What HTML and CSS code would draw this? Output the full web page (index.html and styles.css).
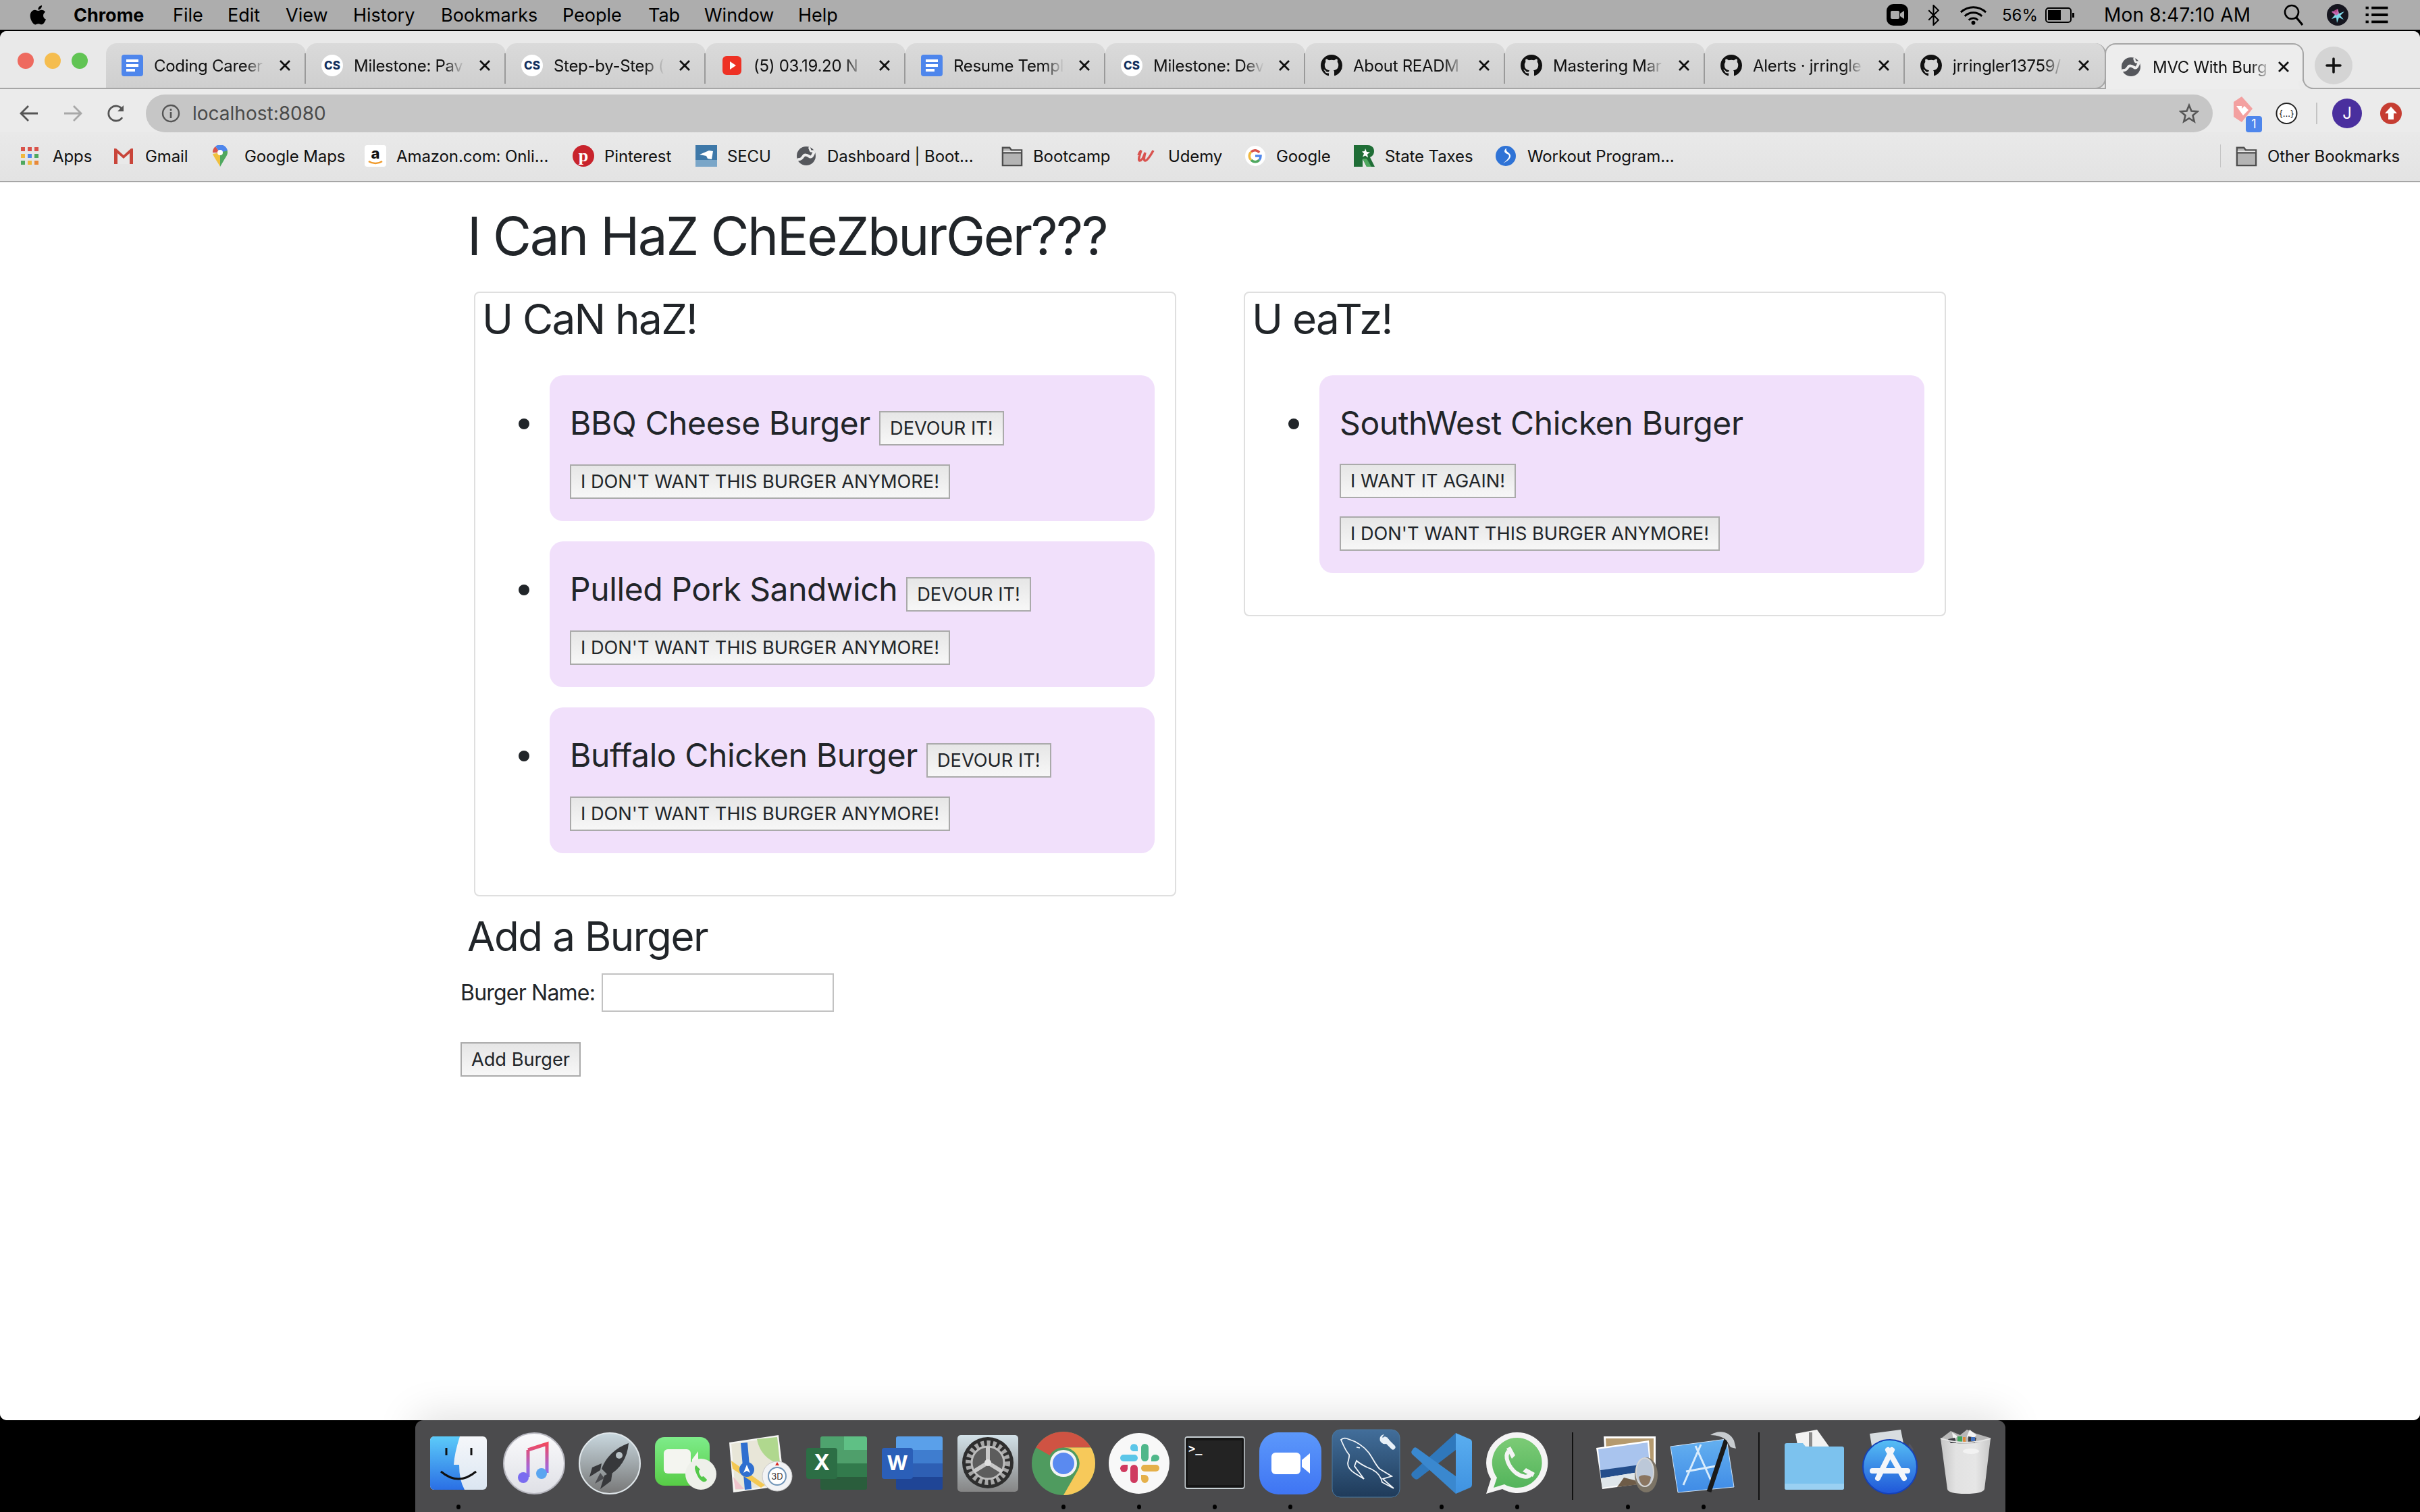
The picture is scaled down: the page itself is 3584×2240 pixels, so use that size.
FILE: index.html
```html
<!DOCTYPE html>
<html lang="en">
<head>
    <meta charset="UTF-8">
    <meta name="viewport" content="width=device-width, initial-scale=1.0">
    <title>MVC With Burgers</title>
    <link rel="stylesheet" href="styles.css">
</head>
<body>

    <svg class="defs" width="0" height="0">
        <defs>
            <symbol id="fav-docs" viewBox="0 0 32 32">
                <rect x="0" y="0" width="32" height="32" rx="4" fill="#4e86ec"/>
                <rect x="7" y="7" width="18" height="4" fill="#fff"/>
                <rect x="7" y="14" width="18" height="4" fill="#fff"/>
                <rect x="7" y="21" width="13" height="4" fill="#fff"/>
            </symbol>
            <symbol id="fav-cs" viewBox="0 0 32 32">
                <circle cx="16" cy="16" r="16" fill="#fff"/>
                <text x="16" y="22" text-anchor="middle" font-family="Inter, sans-serif" font-weight="800" font-size="17" fill="#12305e">CS</text>
            </symbol>
            <symbol id="fav-git" viewBox="0 0 16 16">
                <path fill="#111" d="M8 0C3.58 0 0 3.58 0 8c0 3.54 2.29 6.53 5.47 7.59.4.07.55-.17.55-.38 0-.19-.01-.82-.01-1.49-2.01.37-2.53-.49-2.69-.94-.09-.23-.48-.94-.82-1.13-.28-.15-.68-.52-.01-.53.63-.01 1.08.58 1.23.82.72 1.21 1.87.87 2.33.66.07-.52.28-.87.51-1.07-1.78-.2-3.64-.89-3.64-3.95 0-.87.31-1.59.82-2.15-.08-.2-.36-1.02.08-2.12 0 0 .67-.21 2.2.82.64-.18 1.32-.27 2-.27.68 0 1.36.09 2 .27 1.53-1.04 2.2-.82 2.2-.82.44 1.1.16 1.92.08 2.12.51.56.82 1.27.82 2.15 0 3.07-1.87 3.75-3.65 3.95.29.25.54.73.54 1.48 0 1.07-.01 1.93-.01 2.2 0 .21.15.46.55.38A8.013 8.013 0 0016 8c0-4.42-3.58-8-8-8z"/>
            </symbol>
            <symbol id="fav-yt" viewBox="0 0 32 32">
                <rect x="2" y="2" width="28" height="28" rx="6" fill="#ee3124"/>
                <path d="M13 10l9 6-9 6z" fill="#fff"/>
            </symbol>
            <symbol id="fav-globe" viewBox="0 0 32 32">
                <circle cx="16" cy="16" r="14" fill="#55575c"/>
                <path d="M3 21c5 1 7-2 9-5s6-1 9 1 5-2 7-8" stroke="#ededed" stroke-width="4" fill="none"/>
                <path d="M20 3c2 2 1 5 3 6l5 0" stroke="#ededed" stroke-width="3" fill="none"/>
            </symbol>
            <symbol id="ico-folder" viewBox="0 0 34 32">
                <path d="M2 3h11l3 4h16v24H2z" fill="#b4b4b4" stroke="#4d4d4d" stroke-width="2.5"/>
                <path d="M2 11h30" stroke="#4d4d4d" stroke-width="2.5"/>
                <path d="M3 8h28v2H3z" fill="#e8e8e8"/>
            </symbol>
            <symbol id="ico-close" viewBox="0 0 18 18">
                <path d="M2 2l14 14M16 2L2 16" stroke="#111" stroke-width="2.800" fill="none"/>
            </symbol>
            <linearGradient id="g-finder" x1="0" y1="0" x2="0" y2="1"><stop offset="0" stop-color="#5ccbf9"/><stop offset="1" stop-color="#2a6fe5"/></linearGradient>
            <linearGradient id="g-finder2" x1="0" y1="0" x2="0" y2="1"><stop offset="0" stop-color="#f5f7fa"/><stop offset="1" stop-color="#dbe6f2"/></linearGradient>
            <linearGradient id="g-disc" x1="0" y1="0" x2="0" y2="1"><stop offset="0" stop-color="#fafafc"/><stop offset="1" stop-color="#dfe0e6"/></linearGradient>
            <linearGradient id="g-note" gradientUnits="userSpaceOnUse" x1="0" y1="20" x2="0" y2="80"><stop offset="0" stop-color="#f2485e"/><stop offset=".6" stop-color="#a566d8"/><stop offset="1" stop-color="#6a7cf5"/></linearGradient>
            <linearGradient id="g-rocket" x1="0" y1="0" x2="0" y2="1"><stop offset="0" stop-color="#c9d8df"/><stop offset="1" stop-color="#777"/></linearGradient>
            <linearGradient id="g-facetime" x1="0" y1="0" x2="0" y2="1"><stop offset="0" stop-color="#7eec8a"/><stop offset="1" stop-color="#57cc46"/></linearGradient>
            <linearGradient id="g-prefs" x1="0" y1="0" x2="0" y2="1"><stop offset="0" stop-color="#d2e1e8"/><stop offset="1" stop-color="#858585"/></linearGradient>
            <linearGradient id="g-zoom" x1="0" y1="0" x2="0" y2="1"><stop offset="0" stop-color="#5c98fb"/><stop offset="1" stop-color="#3f75f3"/></linearGradient>
            <linearGradient id="g-mysql" x1="0" y1="0" x2="0" y2="1"><stop offset="0" stop-color="#426e9a"/><stop offset="1" stop-color="#1f3b5a"/></linearGradient>
            <linearGradient id="g-vscode" x1="0" y1="0" x2="0" y2="1"><stop offset="0" stop-color="#5aaef0"/><stop offset="1" stop-color="#3f92e0"/></linearGradient>
            <linearGradient id="g-whats" x1="0" y1="0" x2="0" y2="1"><stop offset="0" stop-color="#7ccb76"/><stop offset="1" stop-color="#53b45b"/></linearGradient>
            <linearGradient id="g-xcode" x1="0" y1="0" x2="0" y2="1"><stop offset="0" stop-color="#64b0f0"/><stop offset="1" stop-color="#3f8be6"/></linearGradient>
            <linearGradient id="g-store" x1="0" y1="0" x2="0" y2="1"><stop offset="0" stop-color="#56bff5"/><stop offset="1" stop-color="#1f56d8"/></linearGradient>
            <linearGradient id="g-trash" x1="0" y1="0" x2="1" y2="0"><stop offset="0" stop-color="#c6c6c6"/><stop offset=".3" stop-color="#e2e2e2"/><stop offset=".7" stop-color="#e6e6e6"/><stop offset="1" stop-color="#c8c8c8"/></linearGradient>
        </defs>
    </svg>

    <div class="menubar">
        <svg class="apple" viewBox="0 0 26 30"><path fill="#000" d="M21.5 16c0-3.4 2.8-5 2.9-5.100-1.600-2.300-4-2.600-4.900-2.700-2.100-.2-4 1.200-5.100 1.200s-2.700-1.200-4.400-1.200C7.700 8.300 5.600 9.600 4.500 11.600c-2.400 4.100-.6 10.200 1.700 13.500 1.100 1.600 2.500 3.500 4.200 3.400 1.700-.1 2.300-1.100 4.400-1.100s2.600 1.100 4.400 1c1.800 0 3-1.600 4.100-3.300 1.300-1.900 1.800-3.700 1.900-3.800-.1 0-3.700-1.400-3.700-5.300zM18.200 6c.9-1.100 1.500-2.700 1.400-4.200-1.300.1-3 .9-3.900 2-.8 1-1.600 2.600-1.400 4.100 1.500.1 3-.8 3.900-1.900z"/></svg>
        <div class="menu-items">
            <span class="menu-app">Chrome</span>
            <span>File</span>
            <span>Edit</span>
            <span>View</span>
            <span>History</span>
            <span>Bookmarks</span>
            <span>People</span>
            <span>Tab</span>
            <span>Window</span>
            <span>Help</span>
        </div>
        <div class="status">
            <svg class="st-zoom" viewBox="0 0 32 32"><rect width="32" height="32" rx="10" fill="#000"/><rect x="6" y="10" width="13" height="12" rx="2" fill="#adadad"/><path d="M20 14l6-4v12l-6-4z" fill="#adadad"/></svg>
            <svg class="st-bt" viewBox="0 0 20 30"><path d="M3 8l14 14-7 7V1l7 7L3 22" fill="none" stroke="#000" stroke-width="2"/></svg>
            <svg class="st-wifi" viewBox="0 0 42 30"><path d="M2 11c11-10 27-10 38 0M8 17c7-7 19-7 26 0M14 23c4-4 10-4 14 0" fill="none" stroke="#000" stroke-width="3"/><circle cx="21" cy="27" r="3" fill="#000"/></svg>
            <span class="st-pct">56%</span>
            <svg class="st-batt" viewBox="0 0 44 23"><rect x="1" y="1" width="37" height="21" rx="4" fill="none" stroke="#000" stroke-width="2"/><rect x="4" y="4" width="19" height="15" fill="#000"/><rect x="40" y="8" width="3" height="7" fill="#000"/></svg>
            <span class="st-time">Mon 8:47:10 AM</span>
            <svg class="st-search" viewBox="0 0 30 32"><circle cx="12" cy="12" r="10" fill="none" stroke="#000" stroke-width="2.600"/><path d="M19 20l9 11" stroke="#000" stroke-width="3.200"/></svg>
            <svg class="st-siri" viewBox="0 0 32 32"><circle cx="16" cy="16" r="16" fill="#16161f"/><path d="M16 7l2 7 8-3-6 6 5 6-7-3-3 8-1-8-7 2 5-6-5-6 7 3z" fill="#7fd8e8"/><path d="M16 7l2 7-4 3-7-5z" fill="#d64fa0" opacity=".8"/></svg>
            <svg class="st-list" viewBox="0 0 38 30"><path d="M0 3h5M10 3h28M0 15h5M10 15h28M0 27h5M10 27h28" stroke="#000" stroke-width="4.500"/></svg>
        </div>
    </div>

    <div class="window">
        <div class="tabstrip">
            <div class="traffic">
                <i class="light light-red"></i>
                <i class="light light-yellow"></i>
                <i class="light light-green"></i>
            </div>
            <div class="tab"><svg class="fav"><use href="#fav-docs"/></svg><span class="tab-title">Coding Career</span><svg class="close"><use href="#ico-close"/></svg></div>
            <div class="tab"><svg class="fav"><use href="#fav-cs"/></svg><span class="tab-title">Milestone: Pav</span><svg class="close"><use href="#ico-close"/></svg></div>
            <div class="tab"><svg class="fav"><use href="#fav-cs"/></svg><span class="tab-title">Step-by-Step (</span><svg class="close"><use href="#ico-close"/></svg></div>
            <div class="tab"><svg class="fav"><use href="#fav-yt"/></svg><span class="tab-title">(5) 03.19.20 N</span><svg class="close"><use href="#ico-close"/></svg></div>
            <div class="tab"><svg class="fav"><use href="#fav-docs"/></svg><span class="tab-title">Resume Templ</span><svg class="close"><use href="#ico-close"/></svg></div>
            <div class="tab"><svg class="fav"><use href="#fav-cs"/></svg><span class="tab-title">Milestone: Dev</span><svg class="close"><use href="#ico-close"/></svg></div>
            <div class="tab"><svg class="fav"><use href="#fav-git"/></svg><span class="tab-title">About READM</span><svg class="close"><use href="#ico-close"/></svg></div>
            <div class="tab"><svg class="fav"><use href="#fav-git"/></svg><span class="tab-title">Mastering Mar</span><svg class="close"><use href="#ico-close"/></svg></div>
            <div class="tab"><svg class="fav"><use href="#fav-git"/></svg><span class="tab-title">Alerts · jrringle</span><svg class="close"><use href="#ico-close"/></svg></div>
            <div class="tab tab-last"><svg class="fav"><use href="#fav-git"/></svg><span class="tab-title">jrringler13759/</span><svg class="close"><use href="#ico-close"/></svg></div>
            <div class="tab tab-active"><svg class="fav"><use href="#fav-globe"/></svg><span class="tab-title">MVC With Burg</span><svg class="close"><use href="#ico-close"/></svg></div>
            <div class="new-tab"><svg viewBox="0 0 24 24"><path d="M12 2v20M2 12h20" stroke="#111" stroke-width="3.600" stroke-linecap="round"/></svg></div>
        </div>

        <div class="toolbar">
            <svg class="nav-icon" viewBox="0 0 28 26"><path d="M27 13H3M13 2L2 13l11 11" fill="none" stroke="#555" stroke-width="2.800"/></svg>
            <svg class="nav-icon nav-forward" viewBox="0 0 28 26"><path d="M1 13h24M15 2l11 11-11 11" fill="none" stroke="#a8a8a8" stroke-width="2.800"/></svg>
            <svg class="nav-icon nav-reload" viewBox="0 0 28 28"><path d="M23 20a11 11 0 1 1 0-12" fill="none" stroke="#555" stroke-width="2.800"/><path d="M25 2v9h-9z" fill="#555"/></svg>
            <div class="address">
                <svg class="info" viewBox="0 0 28 28"><circle cx="14" cy="14" r="12" fill="none" stroke="#555" stroke-width="2.400"/><path d="M14 12v9M14 7v3" stroke="#555" stroke-width="2.600"/></svg>
                <span class="url">localhost:8080</span>
                <svg class="star" viewBox="0 0 30 30"><path d="M15 3l3.500 8.500 9 .7-7 5.800 2.200 9L15 22.200 7.300 27l2.200-9-7-5.800 9-.7z" fill="none" stroke="#555" stroke-width="2.600"/></svg>
            </div>
            <div class="ext ext-pink">
                <svg viewBox="0 0 30 38"><path d="M2 8l12-8 16 18-16 20-12-8z" fill="#f3a0a0"/><path d="M6 14h8v4l4-4 6 6-8 8z" fill="#fff"/></svg>
                <span class="ext-badge">1</span>
            </div>
            <svg class="ext-braces" viewBox="0 0 33 32"><circle cx="16.500" cy="16" r="15" fill="#fff" stroke="#222" stroke-width="2"/><text x="16.500" y="21" text-anchor="middle" font-family="Inter, sans-serif" font-size="13" fill="#222">{...}</text></svg>
            <i class="tool-sep"></i>
            <div class="avatar">J</div>
            <svg class="ext-red" viewBox="0 0 32 32"><circle cx="16" cy="16" r="16" fill="#c63d32"/><path d="M16 6l9 10h-5v9h-8v-9H7z" fill="#fff"/></svg>
        </div>

        <div class="bookmarks">
            <div class="bm">
                <svg class="bm-icon" viewBox="0 -3 32 32"><g><rect x="0" y="0" width="6" height="6" fill="#d9534a"/><rect x="10" y="0" width="6" height="6" fill="#d9534a"/><rect x="20" y="0" width="6" height="6" fill="#d9534a"/><rect x="0" y="10" width="6" height="6" fill="#f0b83e"/><rect x="10" y="10" width="6" height="6" fill="#4e86ec"/><rect x="20" y="10" width="6" height="6" fill="#4fa85f"/><rect x="0" y="20" width="6" height="6" fill="#4fa85f"/><rect x="10" y="20" width="6" height="6" fill="#f0b83e"/><rect x="20" y="20" width="6" height="6" fill="#e8893a"/></g></svg>
                <span>Apps</span>
            </div>
            <div class="bm">
                <svg class="bm-icon" viewBox="0 -3 32 32"><path d="M2 3l13 11L28 3v22H2z" fill="#e9e9e9"/><path d="M1 25V2h3l11 10L26 2h3v23h-5V9l-9 8-9-8v16z" fill="#c9453a"/></svg>
                <span>Gmail</span>
            </div>
            <div class="bm">
                <svg class="bm-icon" viewBox="0 0 32 32"><path d="M11 0a11 11 0 0 1 11 11c0 3-2 6-4 9L11 32z" fill="#4fa85f"/><path d="M11 32C8 26 2 18 0 13l11-2z" fill="#f0c03e"/><path d="M0 11A11 11 0 0 1 4 2l7 9z" fill="#d9534a"/><path d="M4 2A11 11 0 0 1 22 8L11 11z" fill="#4e86ec"/><circle cx="11" cy="11" r="4" fill="#fff"/></svg>
                <span>Google Maps</span>
            </div>
            <div class="bm">
                <svg class="bm-icon" viewBox="0 0 32 32"><rect width="32" height="32" rx="4" fill="#fff"/><text x="16" y="20" text-anchor="middle" font-family="Inter, sans-serif" font-weight="800" font-size="22" fill="#111">a</text><path d="M6 24c6 4 14 4 20 0" stroke="#f09a2a" stroke-width="2.500" fill="none"/></svg>
                <span>Amazon.com: Onli...</span>
            </div>
            <div class="bm">
                <svg class="bm-icon" viewBox="0 0 32 32"><circle cx="16" cy="16" r="16" fill="#c8232c"/><text x="16" y="24" text-anchor="middle" font-family="Liberation Serif, serif" font-weight="700" font-size="26" fill="#fff">p</text></svg>
                <span>Pinterest</span>
            </div>
            <div class="bm">
                <svg class="bm-icon" viewBox="0 0 32 32"><rect width="32" height="32" fill="#3e78a8"/><rect y="22" width="32" height="10" fill="#7aa6c8"/><path d="M6 14l14-6 6 1-2 12-6-1-2-4z" fill="#fff"/></svg>
                <span>SECU</span>
            </div>
            <div class="bm">
                <svg class="bm-icon"><use href="#fav-globe"/></svg>
                <span>Dashboard | Boot...</span>
            </div>
            <div class="bm">
                <svg class="bm-icon"><use href="#ico-folder"/></svg>
                <span>Bootcamp</span>
            </div>
            <div class="bm">
                <svg class="bm-icon" viewBox="0 -2 32 32"><path d="M3 13c1-3 3-6 4-7-2 6-5 15-2 15 4 0 7-9 8-12-1 4-3 12 0 12 3 0 7-6 12-15" fill="none" stroke="#d9534f" stroke-width="3.500"/></svg>
                <span>Udemy</span>
            </div>
            <div class="bm">
                <svg class="bm-icon" viewBox="0 0 32 32"><circle cx="16" cy="16" r="15" fill="#fff"/><path d="M22 11a8 8 0 0 0-12-1" fill="none" stroke="#d9534a" stroke-width="3.500"/><path d="M10 10a8 8 0 0 0 0 12" fill="none" stroke="#f0b83e" stroke-width="3.500"/><path d="M10 22a8 8 0 0 0 12 0" fill="none" stroke="#4fa85f" stroke-width="3.500"/><path d="M22 22c2-2 2-4 2-6h-8" fill="none" stroke="#4e86ec" stroke-width="3.500"/></svg>
                <span>Google</span>
            </div>
            <div class="bm">
                <svg class="bm-icon" viewBox="0 0 32 32"><path d="M1 0h20c7 0 10 4 10 9s-3 8-6 9l7 14H20l-6-12v12H1z" fill="#1f6d36"/><path d="M18 5l2 5 5 .5-4 3 1 5-4-3-4 2 2-5-3-3 4-.5z" fill="#fff"/><path d="M20 32l-6-12h6l7 12z" fill="#4fa85f"/></svg>
                <span>State Taxes</span>
            </div>
            <div class="bm">
                <svg class="bm-icon" viewBox="0 -1 32 32"><circle cx="15" cy="15" r="15" fill="#2f73d6"/><path d="M16 3c-4 4-4 7 1 9s4 6-6 14c6-3 12-7 11-12s-8-4-6-11z" fill="#fff"/></svg>
                <span>Workout Program...</span>
            </div>
            <div class="bm bm-other">
                <svg class="bm-icon"><use href="#ico-folder"/></svg>
                <span>Other Bookmarks</span>
            </div>
        </div>

        <main class="page">
            <h1 class="page-title">I Can HaZ ChEeZburGer???</h1>
            <div class="columns">
                <section class="card">
                    <h2 class="card-title">U CaN haZ!</h2>
                    <ul class="burger-list">
                        <li class="burger">
                            <div class="burger-row">
                                <span class="burger-name">BBQ Cheese Burger</span>
                                <button class="btn" type="button">DEVOUR IT!</button>
                            </div>
                            <button class="btn btn-block" type="button">I DON'T WANT THIS BURGER ANYMORE!</button>
                        </li>
                        <li class="burger">
                            <div class="burger-row">
                                <span class="burger-name">Pulled Pork Sandwich</span>
                                <button class="btn" type="button">DEVOUR IT!</button>
                            </div>
                            <button class="btn btn-block" type="button">I DON'T WANT THIS BURGER ANYMORE!</button>
                        </li>
                        <li class="burger">
                            <div class="burger-row">
                                <span class="burger-name">Buffalo Chicken Burger</span>
                                <button class="btn" type="button">DEVOUR IT!</button>
                            </div>
                            <button class="btn btn-block" type="button">I DON'T WANT THIS BURGER ANYMORE!</button>
                        </li>
                    </ul>
                </section>
                <section class="card">
                    <h2 class="card-title">U eaTz!</h2>
                    <ul class="burger-list">
                        <li class="burger">
                            <div class="burger-row">
                                <span class="burger-name">SouthWest Chicken Burger</span>
                            </div>
                            <button class="btn btn-block btn-first" type="button">I WANT IT AGAIN!</button>
                            <button class="btn btn-block" type="button">I DON'T WANT THIS BURGER ANYMORE!</button>
                        </li>
                    </ul>
                </section>
            </div>
            <h2 class="add-title">Add a Burger</h2>
            <form class="add-form">
                <div class="add-row">
                    <label class="add-label" for="burgerName">Burger Name:</label>
                    <input class="add-input" type="text" id="burgerName">
                </div>
                <button class="btn btn-add" type="button">Add Burger</button>
            </form>
        </main>
    </div>

    <div class="dock-row">
        <div class="dock">
            <div class="slot on">
                <svg class="dock-icon" viewBox="0 0 112 104"><rect x="14" y="10" width="84" height="79" rx="6" fill="url(#g-finder2)"/><path d="M20 10H58Q50 35 49 52H57Q57 75 65 89H20a6 6 0 0 1-6-6V16a6 6 0 0 1 6-6z" fill="url(#g-finder)"/><path d="M38 27v11M75 27v11" stroke="#111" stroke-width="3"/><path d="M30 62Q56 84 82 62" fill="none" stroke="#111" stroke-width="3"/></svg>
            </div>
            <div class="slot">
                <svg class="dock-icon" viewBox="0 0 112 104"><circle cx="56" cy="50" r="45" fill="url(#g-disc)" stroke="#b8b8c0" stroke-width="2"/><path d="M47 30L75 21V64" fill="none" stroke="url(#g-note)" stroke-width="5"/><path d="M47 30V70" stroke="url(#g-note)" stroke-width="5"/><ellipse cx="40" cy="71" rx="8" ry="8" fill="#7a6cf0"/><ellipse cx="67" cy="65" rx="8" ry="8" fill="#5aa5f0"/></svg>
            </div>
            <div class="slot">
                <svg class="dock-icon" viewBox="0 0 112 104"><circle cx="56" cy="50" r="45" fill="url(#g-rocket)" stroke="#dfe6ea" stroke-width="2"/><path d="M84 20C70 25 52 36 44 58L54 68C72 58 82 42 84 20Z" fill="#37383b"/><path d="M44 50L30 56 26 70 42 60zM60 62L58 76 42 88 48 68z" fill="#37383b"/><path d="M42 64L34 80 48 72z" fill="#4b4c50"/><circle cx="70" cy="38" r="5" fill="#b9c2c6"/></svg>
            </div>
            <div class="slot">
                <svg class="dock-icon" viewBox="0 0 112 104"><rect x="11" y="11" width="81" height="72" rx="14" fill="url(#g-facetime)"/><rect x="24" y="29" width="40" height="36" rx="6" fill="#f4f5f0"/><path d="M66 44l9-12v30l-9-8z" fill="#f4f5f0"/><circle cx="79" cy="66" r="23" fill="#eef0ea"/><path d="M72 53c-3 2-2 6 0 11s5 11 10 13c3 1 6-1 6-3l-5-5-3 1c-2-2-4-6-4-9l2-2z" fill="#54c84a"/></svg>
            </div>
            <div class="slot">
                <svg class="dock-icon" viewBox="0 0 112 104"><path d="M9 19L82 8 91 83 15 93z" fill="#f6f6f4"/><path d="M12 21L80 11 88 81 18 90z" fill="#e8e6d8"/><path d="M50 14L80 11 84 50C70 48 54 36 50 14z" fill="#b0d88e"/><path d="M26 20L36 19 42 88 32 89z" fill="#2f6fd0"/><path d="M12 46L62 82 56 86 14 58z" fill="#f4c852"/><path d="M15 70l16 18H18z" fill="#f0c4cc"/><circle cx="35" cy="59" r="11" fill="#2f6fd0"/><path d="M35 52l5 12-5-3-5 3z" fill="#fff"/><circle cx="80" cy="69" r="22" fill="#f2f3f5" stroke="#c8c8c8"/><circle cx="80" cy="69" r="13" fill="#fff" stroke="#6f94b8" stroke-width="2"/><text x="80" y="74" text-anchor="middle" font-family="Inter, sans-serif" font-size="13" fill="#333">3D</text><path d="M80 48l3 5h-6z" fill="#d92b20"/></svg>
            </div>
            <div class="slot">
                <svg class="dock-icon" viewBox="0 0 112 104"><rect x="32" y="10" width="69" height="79" rx="3" fill="#2a5d3c"/><path d="M35 10h32v20H32V13a3 3 0 0 1 3-3z" fill="#4ea36e"/><path d="M67 10h31a3 3 0 0 1 3 3v17H67z" fill="#5fc085"/><rect x="32" y="30" width="69" height="20" fill="#4f9f6b"/><rect x="32" y="50" width="69" height="20" fill="#327a4c"/><rect x="11" y="27" width="46" height="46" rx="4" fill="#2c6e45"/><text x="34" y="60" text-anchor="middle" font-family="Inter, sans-serif" font-weight="700" font-size="32" fill="#fff">X</text></svg>
            </div>
            <div class="slot">
                <svg class="dock-icon" viewBox="0 0 112 104"><rect x="32" y="10" width="69" height="79" rx="3" fill="#1f4596"/><path d="M35 10h63a3 3 0 0 1 3 3v17H32V13a3 3 0 0 1 3-3z" fill="#5aa0ea"/><rect x="32" y="30" width="69" height="20" fill="#3f7dcf"/><rect x="32" y="50" width="69" height="20" fill="#2e5fb4"/><rect x="11" y="27" width="46" height="46" rx="4" fill="#2b5fb8"/><text x="34" y="60" text-anchor="middle" font-family="Inter, sans-serif" font-weight="700" font-size="30" fill="#fff">W</text></svg>
            </div>
            <div class="slot">
                <svg class="dock-icon" viewBox="0 0 112 104"><rect x="11" y="8" width="90" height="84" rx="5" fill="url(#g-prefs)"/><circle cx="56" cy="49" r="38" fill="#2e2e2e"/><circle cx="56" cy="49" r="29" fill="none" stroke="#a8a8a8" stroke-width="8" stroke-dasharray="5 4"/><circle cx="56" cy="49" r="24" fill="#5d5d5d" stroke="#bdbdbd" stroke-width="3"/><path d="M56 49V25M56 49L35 62M56 49l21 13" stroke="#c8c8c8" stroke-width="6"/><circle cx="56" cy="49" r="5" fill="#e0e0e0"/></svg>
            </div>
            <div class="slot on">
                <svg class="dock-icon" viewBox="0 0 112 104"><circle cx="56" cy="50" r="47" fill="#4f9b5f"/><path d="M15.300 26.500A47 47 0 0 1 96.700 26.500H56A23.500 23.500 0 0 0 35.600 38Z" fill="#cf5343"/><path d="M56 26.500H96.700A47 47 0 0 1 56 97L76.400 61.800A23.500 23.500 0 0 0 56 26.500Z" fill="#f7c95a"/><circle cx="56" cy="50" r="20" fill="#f4f4f4"/><circle cx="56" cy="50" r="16" fill="#5a8af0"/></svg>
            </div>
            <div class="slot on">
                <svg class="dock-icon" viewBox="0 0 112 104"><circle cx="56" cy="50" r="45" fill="#f8f8f8"/><rect x="28" y="37" width="26" height="10" rx="5" fill="#5cc6e8"/><path d="M54 32h-7a5.500 5.500 0 1 1 7-5.500z" fill="#5cc6e8"/><rect x="59" y="21" width="11" height="26" rx="5.500" fill="#4fb78a"/><path d="M74 47v-5a6 5 0 1 1 6 5z" fill="#4fb78a"/><path d="M39 52v6a5.500 5.500 0 1 1-5.500-6z" fill="#cf3a5f"/><rect x="43" y="52" width="11" height="27" rx="5.500" fill="#cf3a5f"/><rect x="59" y="52" width="27" height="10" rx="5" fill="#e5b04a"/><path d="M59 67h5.500a5.500 6 0 1 1-5.500 6z" fill="#e5b04a"/></svg>
            </div>
            <div class="slot on">
                <svg class="dock-icon" viewBox="0 0 112 104"><rect x="11.500" y="10" width="89" height="78" rx="4" fill="#c8d0d4"/><rect x="13" y="12" width="86" height="74" rx="2" fill="#151515"/><rect x="16" y="16" width="80" height="66" fill="#232323"/><text x="17" y="34" font-family="DejaVu Sans Mono, monospace" font-weight="700" font-size="17" fill="#fff">&gt;_</text></svg>
            </div>
            <div class="slot on">
                <svg class="dock-icon" viewBox="0 0 112 104"><rect x="10" y="4" width="92" height="92" rx="28" fill="url(#g-zoom)"/><rect x="28" y="34" width="43" height="32" rx="6" fill="#fff"/><path d="M73 45l12-10v30L73 55z" fill="#fff"/></svg>
            </div>
            <div class="slot">
                <svg class="dock-icon" viewBox="0 0 112 104"><rect x="6" y="0" width="100" height="100" rx="12" fill="url(#g-mysql)" stroke="#4a78a0"/><path d="M19 15C22 12 26 12 30 14C40 17 52 24 60 34C66 42 70 52 76 58L94 69L81 73L97 87L80 78C78 68 70 60 58 56C50 52 46 50 42 46L39 54L53 73L40 65C32 60 29 56 29 50C30 44 32 40 31 37C26 32 22 22 19 15Z" fill="none" stroke="#f2f6fa" stroke-width="1.800"/><path d="M42 26l5 1" stroke="#f2f6fa" stroke-width="1.500"/><path d="M84 14L96 26" stroke="#e8f0f8" stroke-width="7" stroke-linecap="round"/><path d="M77 11a7.500 7.500 0 0 0 11 9l3-4-4-5-4 3-3-3 3-4a7.500 7.500 0 0 0-6 4z" fill="#e8f0f8"/></svg>
            </div>
            <div class="slot on">
                <svg class="dock-icon" viewBox="0 0 112 104"><path d="M77 5V30L21 73Q18 75 15 72L12 69Q10 66 13 63Z" fill="#2f78bc"/><path d="M19 27Q16 25 14 28L12 31Q10 34 13 37L77 95V69Z" fill="#3a88cf"/><path d="M77 5L98 14Q101 15 101 19V81Q101 85 98 86L77 95Z" fill="url(#g-vscode)"/></svg>
            </div>
            <div class="slot on">
                <svg class="dock-icon" viewBox="0 0 112 104"><path d="M56 4a45 45 0 1 1-22 84L10 95l7-22A45 45 0 0 1 56 4z" fill="#f4f4f4"/><path d="M56 12a37 37 0 1 1-19 69L21 86l5-15A37 37 0 0 1 56 12z" fill="url(#g-whats)"/><path d="M43 32C36 40 44 56 54 64 62 70 72 72 76 66" fill="none" stroke="#f4f4f4" stroke-width="6"/><path d="M40 28l6-3 7 13-5 5zM64 62l5-5 13 7-3 6z" fill="#f4f4f4"/></svg>
            </div>
            <i class="dock-sep"></i>
            <div class="slot on">
                <svg class="dock-icon" viewBox="0 0 112 104"><path d="M20 10H97V74H24z" fill="#fff"/><path d="M23 13H94V71H26z" fill="#b59a6e"/><path d="M9 27L87 16 92 78 18 88z" fill="#fff"/><path d="M12 29L85 19 88 52 15 60z" fill="#a9c4ee"/><path d="M15 60L88 50 90 60 16 72z" fill="#244e8c"/><path d="M16 72L90 60 91 76 18 86z" fill="#dfe6ea"/><path d="M40 85l10-14 16 4 6 6z" fill="#6e5c48"/><ellipse cx="83" cy="67" rx="17" ry="26" fill="#7c7466"/><ellipse cx="81" cy="63" rx="13" ry="21" fill="#bcc8d8" stroke="#d6d6d6" stroke-width="2"/><path d="M72 70c6-4 12-3 18 0-1 8-4 13-9 13s-8-6-9-13z" fill="#8a7560"/></svg>
            </div>
            <div class="slot on">
                <svg class="dock-icon" viewBox="0 0 112 104"><path d="M7 25L90 14 101 85 18 93z" fill="url(#g-xcode)" stroke="#cfe4f8"/><path d="M44 24L70 82M52 22L26 82M30 62L74 54" stroke="#d8ecfc" stroke-width="3" fill="none"/><path d="M90 14L64 92" stroke="#1a1a1a" stroke-width="7"/><path d="M66 8C78 0 94 2 101 16L104 28 96 26 90 16C84 10 74 8 66 8Z" fill="#c8ccd0"/></svg>
            </div>
            <i class="dock-sep"></i>
            <div class="slot">
                <svg class="dock-icon" viewBox="0 0 112 104"><path d="M28 6L60 0 80 28H32z" fill="#f2f2f2"/><path d="M48 4h5v26h-5z" fill="#8a8a8a"/><path d="M12 23a3 3 0 0 1 3-3h24l4 5h54a3 3 0 0 1 3 3v58a3 3 0 0 1-3 3H15a3 3 0 0 1-3-3z" fill="#7cc2ee"/><path d="M12 80h88v6a3 3 0 0 1-3 3H15a3 3 0 0 1-3-3z" fill="#9ad0f2"/></svg>
            </div>
            <div class="slot">
                <svg class="dock-icon" viewBox="0 0 112 104"><path d="M26 6L72 0 78 30 30 30z" fill="#d8dde0"/><path d="M85 20l6 9-3 6-6-8z" fill="#55555e"/><circle cx="56" cy="55" r="40" fill="url(#g-store)" stroke="#1541b8" stroke-width="2"/><path d="M59 30L38 72M53 30L77 72M30 61H82" stroke="#f4f6fa" stroke-width="8" stroke-linecap="round"/></svg>
            </div>
            <div class="slot">
                <svg class="dock-icon" viewBox="0 0 112 104"><path d="M19 13Q56 25 93 13L84 88Q82 95 56 95 30 95 29 88Z" fill="url(#g-trash)"/><path d="M21 12L34 2 48 8 58 0 72 6 92 12 72 20 46 21 24 16Z" fill="#b8b8b8"/><path d="M36 4l8 6-6 6zM62 0l10 8-8 10-6-8z" fill="#f4f4f4"/><path d="M30 14l10-2 2 8-8 0zM60 10l12 2-2 8-10 0z" fill="#3c3c42"/><rect x="44" y="10" width="7" height="9" fill="#3fa35a"/><rect x="52" y="11" width="4" height="9" fill="#e08a3a"/><rect x="64" y="11" width="6" height="6" fill="#3f6fc0"/><path d="M19 13Q56 25 93 13" fill="none" stroke="#e4e4e4" stroke-width="2"/><ellipse cx="64" cy="32" rx="12" ry="4" fill="#f2f2f2"/></svg>
            </div>
        </div>
    </div>

</body>
</html>
```

FILE: styles.css
```css
* {
    box-sizing: border-box;
}

html, body {
    margin: 0;
    height: 100%;
}

body {
    width: 3584px;
    height: 2240px;
    overflow: hidden;
    display: flex;
    flex-direction: column;
    background: #000;
    font-family: 'Inter', 'Liberation Sans', sans-serif;
    color: #212529;
}

/* kept in the tree (not display:none), the gradients need it */
.defs {
    position: absolute;
    width: 0;
    height: 0;
}

/* mac menu bar */
.menubar {
    flex: 0 0 46px;
    display: flex;
    align-items: center;
    background: #adadad;
    border-bottom: 2px solid #000;
    font-size: 27px;
    color: #000;
}

.apple {
    flex: 0 0 28px;
    width: 28px;
    height: 32px;
    margin-left: 41px;
}

.menu-items {
    display: grid;
    grid-template-columns: 147px 81px 86px 100px 130px 180px 127px 83px 139px auto;
    margin-left: 40px;
}

.menu-app {
    font-weight: 700;
}

.status {
    display: flex;
    align-items: center;
    margin-left: auto;
    margin-right: 45px;
}

.st-zoom { width: 32px; height: 32px; }
.st-bt { width: 21px; height: 31px; margin-left: 27px; }
.st-wifi { width: 41px; height: 30px; margin-left: 28px; }
.st-pct { font-size: 24px; margin-left: 22px; }
.st-batt { width: 44px; height: 23px; margin-left: 11px; }
.st-time { width: 218px; margin-left: 43px; font-size: 28px; letter-spacing: .2px; white-space: nowrap; }
.st-search { width: 30px; height: 32px; margin-left: 48px; }
.st-siri { width: 32px; height: 32px; margin-left: 34px; }
.st-list { width: 38px; height: 26px; margin-left: 23px; }

/* browser window */
.window {
    flex: 0 0 2058px;
    display: flex;
    flex-direction: column;
    background: #fff;
    border-radius: 10px;
    overflow: hidden;
}

.tabstrip {
    flex: 0 0 86px;
    display: flex;
    align-items: flex-end;
    background: #e9e9e9;
    border-bottom: 2px solid #a6a6a6;
}

.traffic {
    flex: 0 0 157px;
    align-self: stretch;
    display: flex;
    align-items: center;
    gap: 16px;
    padding: 0 0 0 26px;
    margin-top: 4px;
}

.light {
    width: 24px;
    height: 24px;
    border-radius: 50%;
}

.light-red { background: #ee6a5f; }
.light-yellow { background: #f5bd4f; }
.light-green { background: #61c454; }

.tab {
    position: relative;
    flex: 0 0 296px;
    height: 66px;
    display: flex;
    align-items: center;
    padding-left: 23px;
    background: linear-gradient(#dadada, #cfcfcf);
    border-radius: 16px 16px 0 0;
    font-size: 24px;
    color: #111;
}

.tab::after {
    content: "";
    position: absolute;
    right: 0;
    top: 15px;
    bottom: 6px;
    width: 2px;
    background: #9a9a9a;
}

.tab-last::after,
.tab-active::after {
    display: none;
}

.fav {
    flex: 0 0 32px;
    width: 32px;
    height: 32px;
}

.tab-title {
    flex: 0 0 164px;
    width: 164px;
    margin-left: 16px;
    white-space: nowrap;
    overflow: hidden;
    letter-spacing: -.3px;
    -webkit-mask-image: linear-gradient(to right, #000 82%, transparent 100%);
    mask-image: linear-gradient(to right, #000 82%, transparent 100%);
}

.close {
    flex: 0 0 18px;
    width: 18px;
    height: 18px;
    margin-left: 21px;
}

/* the tab left of the open one curves into the strip line */
.tab-last {
    flex-basis: 298px;
    height: 68px;
    margin: 0 -2px -2px 0;
    border-right: 2px solid #a6a6a6;
    border-bottom: 2px solid #a6a6a6;
    border-radius: 16px 16px 16px 0;
}

.tab-active {
    flex-basis: 295px;
    height: 68px;
    margin-bottom: -2px;
    background: #ededed;
    border: 2px solid #a6a6a6;
    border-bottom: none;
    padding-left: 21px;
}

.tab-active .tab-title {
    flex-basis: 176px;
    width: 176px;
    margin-right: -12px;
}

.tab-active::before {
    content: "";
    position: absolute;
    right: -18px;
    bottom: 0;
    width: 16px;
    height: 16px;
    border-left: 2px solid #a6a6a6;
    border-bottom: 2px solid #a6a6a6;
    border-bottom-left-radius: 16px;
    background: #e9e9e9;
    box-shadow: -6px 6px 0 #ebebeb;
}

.new-tab {
    flex: 0 0 56px;
    width: 56px;
    height: 56px;
    margin: 0 0 5px 16px;
    display: flex;
    align-items: center;
    justify-content: center;
    border-radius: 50%;
    background: #d4d4d4;
}

.new-tab svg {
    width: 24px;
    height: 24px;
}

.toolbar {
    flex: 0 0 64px;
    display: flex;
    align-items: center;
    padding: 8px 0 0 29px;
    background: #ebebeb;
}

.nav-icon {
    flex: 0 0 28px;
    width: 28px;
    height: 28px;
}

.nav-forward { margin-left: 37px; }
.nav-reload { margin-left: 36px; }

.address {
    flex: 0 0 3061px;
    height: 56px;
    margin-left: 30px;
    display: flex;
    align-items: center;
    padding: 0 20px 0 23px;
    background: #c6c6c6;
    border-radius: 28px;
    font-size: 28px;
}

.info {
    width: 28px;
    height: 28px;
}

.url {
    margin-left: 18px;
    color: #4a4a4a;
}

.star {
    width: 30px;
    height: 30px;
    margin-left: auto;
}

.ext {
    position: relative;
    width: 44px;
    height: 44px;
    margin-left: 29px;
}

.ext svg {
    width: 30px;
    height: 38px;
    margin-top: -3px;
}

.ext-badge {
    position: absolute;
    right: 0;
    bottom: -6px;
    width: 24px;
    height: 24px;
    border-radius: 4px;
    background: #4e86ec;
    color: #fff;
    font-size: 18px;
    line-height: 24px;
    text-align: center;
}

.ext-braces {
    width: 33px;
    height: 32px;
    margin-left: 20px;
}

.tool-sep {
    width: 2px;
    height: 32px;
    margin-left: 27px;
    background: #c4c4c4;
}

.avatar {
    width: 44px;
    height: 44px;
    margin-left: 22px;
    border-radius: 50%;
    background: #4a2f9e;
    color: #fff;
    font-size: 24px;
    line-height: 44px;
    text-align: center;
}

.ext-red {
    width: 32px;
    height: 32px;
    margin-left: 27px;
}

.bookmarks {
    flex: 0 0 74px;
    display: grid;
    grid-template-columns: 137px 147px 225px 308px 182px 148px 305px 200px 160px 161px 211px 1073px auto;
    align-items: center;
    padding: 0 0 2px 31px;
    background: linear-gradient(#e9e9e9, #e3e3e3);
    border-bottom: 2px solid #a6a6a6;
    font-size: 24px;
    letter-spacing: -.1px;
    color: #111;
}

.bm {
    display: flex;
    align-items: center;
    gap: 15px;
    white-space: nowrap;
}

.bm-icon {
    flex: 0 0 32px;
    width: 32px;
    height: 32px;
}

.bm-other {
    height: 34px;
    padding-left: 22px;
    border-left: 1px solid #c4c4c4;
}

/* the app itself */
.page {
    flex: 1;
    padding: 32px 0 0 682px;
    background: #fff;
}

.page-title {
    margin: 0 0 34px 10px;
    font-size: 78px;
    font-weight: 400;
    line-height: 96px;
    letter-spacing: -2.4px;
}

.columns {
    display: flex;
    align-items: flex-start;
    gap: 100px;
    margin-left: 20px;
}

.card {
    flex: 0 0 1040px;
    border: 2px solid #dfdfdf;
    border-radius: 8px;
}

.card-title {
    margin: 0 0 45px;
    padding-left: 10px;
    font-size: 62px;
    font-weight: 400;
    line-height: 77px;
    letter-spacing: -1.8px;
}

.burger-list {
    list-style: none;
    margin: 0;
    padding: 0 30px 62px 110px;
    display: flex;
    flex-direction: column;
    gap: 30px;
}

.burger {
    position: relative;
    padding: 42px 30px 33px;
    background: #f1e0fb;
    border-radius: 20px;
}

.burger::before {
    content: "";
    position: absolute;
    left: -46px;
    top: 64px;
    width: 16px;
    height: 16px;
    border-radius: 50%;
    background: #212529;
}

.burger-row {
    display: flex;
    align-items: baseline;
    gap: 13px;
    margin-bottom: 28px;
}

.burger-name {
    font-size: 48px;
    line-height: 58px;
    letter-spacing: -.4px;
}

.btn {
    height: 51px;
    padding: 0 14px;
    border: 2px solid #aaa;
    border-radius: 0;
    background: linear-gradient(#e6e6e6, #f7f7f7);
    font-family: inherit;
    font-size: 27.2px;
    color: #212529;
}

.btn-block {
    display: block;
}

.btn-first {
    margin: 31px 0 27px;
}

.add-title {
    margin: 21px 0 16px 10px;
    font-size: 60px;
    font-weight: 400;
    line-height: 77px;
    letter-spacing: -1.4px;
}

.add-row {
    display: flex;
    align-items: center;
    gap: 10px;
    font-size: 32px;
    letter-spacing: -.8px;
}

.add-input {
    width: 344px;
    height: 57px;
    border: 2px solid #c2c2c2;
    background: #fff;
}

.btn-add {
    margin-top: 45px;
    width: 178px;
    padding: 0;
}

/* dock */
.dock-row {
    flex: 0 0 136px;
    display: flex;
    justify-content: center;
}

.dock {
    width: 2355px;
    display: flex;
    padding-left: 8px;
    background: #4b4b4d;
    border-radius: 12px 12px 0 0;
    box-shadow: 0 -6px 60px rgba(0, 0, 0, .13);
}

.slot {
    flex: 0 0 111.7px;
    padding-top: 14px;
    display: flex;
    flex-direction: column;
    align-items: center;
}

.dock-icon {
    width: 112px;
    height: 104px;
    overflow: visible;
}

.slot.on::after {
    content: "";
    width: 6px;
    height: 7px;
    margin-top: 7px;
    border-radius: 50%;
    background: #000;
}

.dock-sep {
    flex: 0 0 2px;
    height: 100px;
    margin: 18px 25px 0;
    background: #111;
}
```
